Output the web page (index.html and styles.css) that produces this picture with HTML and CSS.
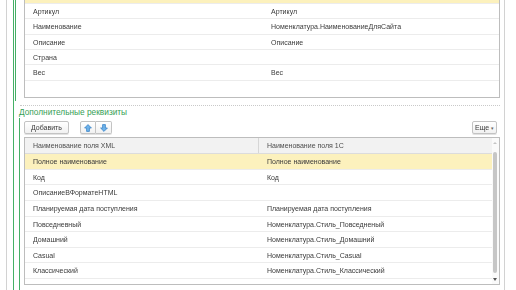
FILE: index.html
```html
<!DOCTYPE html>
<html lang="ru">
<head>
<meta charset="utf-8">
<title>Реквизиты</title>
<link rel="stylesheet" href="styles.css">
</head>
<body>
<div class="page">
  <div class="frame">
    <div class="group">
      <div class="sec-top">
        <div class="grid top-grid">
          <div class="row sel"><div class="c1"></div><div class="c2"></div></div>
          <div class="row"><div class="c1">Артикул</div><div class="c2">Артикул</div></div>
          <div class="row"><div class="c1">Наименование</div><div class="c2">Номенклатура.НаименованиеДляСайта</div></div>
          <div class="row"><div class="c1">Описание</div><div class="c2">Описание</div></div>
          <div class="row"><div class="c1">Страна</div><div class="c2"></div></div>
          <div class="row"><div class="c1">Вес</div><div class="c2">Вес</div></div>
          <div class="row last"><div class="c1"></div><div class="c2"></div></div>
        </div>
      </div>
      <div class="sep"></div>
      <div class="title">Дополнительные реквизиты</div>
      <div class="sec-bottom">
        <div class="toolbar">
          <div class="btn add"><span class="txt">Добавить</span></div>
          <div class="btn-group">
            <div class="btn icon">
              <svg width="8" height="8" viewBox="0 0 8 8"><path d="M4 0.6 L7.4 4 L5.4 4 L5.4 7.4 L2.6 7.4 L2.6 4 L0.6 4 Z" fill="#6fb3ea" stroke="#3a84c8" stroke-width="0.8" stroke-linejoin="round"/></svg>
            </div>
            <div class="btn icon">
              <svg width="8" height="8" viewBox="0 0 8 8"><path d="M4 7.4 L7.4 4 L5.4 4 L5.4 0.6 L2.6 0.6 L2.6 4 L0.6 4 Z" fill="#6fb3ea" stroke="#3a84c8" stroke-width="0.8" stroke-linejoin="round"/></svg>
            </div>
          </div>
          <div class="btn more"><span class="txt">Еще</span><span class="caret">▾</span></div>
        </div>
        <div class="grid bottom-grid">
          <div class="body">
            <div class="head"><div class="c1">Наименование поля XML</div><div class="c2">Наименование поля 1С</div></div>
            <div class="row sel"><div class="c1">Полное наименование</div><div class="c2">Полное наименование</div></div>
            <div class="row"><div class="c1">Код</div><div class="c2">Код</div></div>
            <div class="row"><div class="c1">ОписаниеВФорматеHTML</div><div class="c2"></div></div>
            <div class="row"><div class="c1">Планируемая дата поступления</div><div class="c2">Планируемая дата поступления</div></div>
            <div class="row"><div class="c1">Повседневный</div><div class="c2">Номенклатура.Стиль_Повседненый</div></div>
            <div class="row"><div class="c1">Домашний</div><div class="c2">Номенклатура.Стиль_Домашний</div></div>
            <div class="row"><div class="c1">Casual</div><div class="c2">Номенклатура.Стиль_Casual</div></div>
            <div class="row"><div class="c1">Классический</div><div class="c2">Номенклатура.Стиль_Классический</div></div>
            <div class="row"><div class="c1"></div><div class="c2"></div></div>
          </div>
          <div class="scroll">
            <span class="arr up"></span>
            <span class="thumb"></span>
            <span class="arr down"></span>
          </div>
        </div>
      </div>
    </div>
  </div>
</div>
</body>
</html>
```

FILE: styles.css
```css
* { box-sizing: border-box; }
html, body { margin: 0; padding: 0; }
body {
  width: 516px;
  height: 290px;
  overflow: hidden;
  background: #fff;
  font-family: "Liberation Sans", Arial, sans-serif;
  color: #3a3a3a;
}
.page { height: 290px; padding-left: 6px; display: flex; }
.frame {
  width: 499px;
  height: 100%;
  border-left: 1px solid #d2d2d2;
  border-right: 1px solid #d2d2d2;
  padding: 0 4px 0 6px;
  display: flex;
}
.group {
  flex: 1;
  min-width: 0;
  border-left: 1px solid #45b066;
  padding-left: 1px;
  display: flex;
  flex-direction: column;
}
.sec-top {
  border-left: 1px solid #45b066;
  padding: 0 0 3px 8px;
}
.grid {
  border: 1px solid #bdbdbd;
  background: #fff;
  font-size: 7px;
}
.top-grid { margin-top: -12px; }
.row {
  display: flex;
  align-items: center;
  height: 15px;
  border-bottom: 1px solid #ececec;
}
.c1, .c2, .txt { filter: grayscale(1); }
.top-grid .row:nth-child(3),
.top-grid .row:nth-child(6),
.top-grid .row:nth-child(7) { height: 16px; }
.row.last { border-bottom: none; }
.row.sel { background: #fcf1bd; }
.top-grid .c1 { width: 237px; padding-left: 8px; }
.top-grid .c2 { flex: 1; padding-left: 9px; }
.sep {
  margin: 4px 0 0 5px;
  border-top: 1px dotted #c9c9c9;
}
.title {
  margin: 1px 0 0 4px;
  font-size: 8.3px;
  line-height: 11px;
  color: #36a055;
}
.sec-bottom {
  flex: 1;
  margin-left: 4px;
  border-left: 1px solid #45b066;
  padding: 3px 0 0 4px;
}
.toolbar {
  display: flex;
  align-items: center;
  height: 13px;
}
.btn {
  height: 13px;
  border: 1px solid #c3c3c3;
  border-radius: 2px;
  background: linear-gradient(#ffffff, #f1f1f1);
  box-shadow: 0 1px 0 #e2e2e2;
  font-size: 7px;
  color: #3a3a3a;
  display: flex;
  align-items: center;
  justify-content: center;
}
.add { width: 45px; }
.btn-group { display: flex; margin-left: 11px; }
.btn.icon { width: 16px; }
.btn-group .btn:first-child { border-radius: 2px 0 0 2px; }
.btn-group .btn:last-child { border-radius: 0 2px 2px 0; border-left: none; }
.more { margin-left: auto; margin-right: 3px; width: 25px; }
.caret { font-size: 5px; margin-left: 2px; color: #666; }
.bottom-grid {
  margin-top: 3px;
  height: 148px;
  overflow: hidden;
  display: flex;
}
.bottom-grid .body { flex: 1; min-width: 0; }
.head {
  display: flex;
  height: 16px;
  align-items: stretch;
  background: #f2f2f2;
  border-bottom: 1px solid #dcdcdc;
  color: #4d4d4d;
}
.head .c1, .head .c2 { display: flex; align-items: center; }
.bottom-grid .c1 { width: 233px; padding-left: 8px; }
.bottom-grid .c2 { flex: 1; padding-left: 9px; }
.head .c2 { border-left: 1px solid #d6d6d6; padding-left: 8px; }
.bottom-grid .row { height: 16px; }
.bottom-grid .row:nth-child(3),
.bottom-grid .row:nth-child(6),
.bottom-grid .row:nth-child(8) { height: 15px; }
.scroll {
  width: 7px;
  position: relative;
  background: #fafafa;
}
.arr {
  position: absolute;
  left: 1px;
  width: 0;
  height: 0;
  border-left: 2px solid transparent;
  border-right: 2px solid transparent;
}
.arr.up { top: 4px; border-bottom: 2px solid #c4c4c4; }
.arr.down { top: 140px; border-top: 3px solid #555; }
.thumb {
  position: absolute;
  left: 1px;
  top: 14px;
  width: 4px;
  height: 121px;
  border-radius: 2px;
  background: #c6c6c6;
}
```
